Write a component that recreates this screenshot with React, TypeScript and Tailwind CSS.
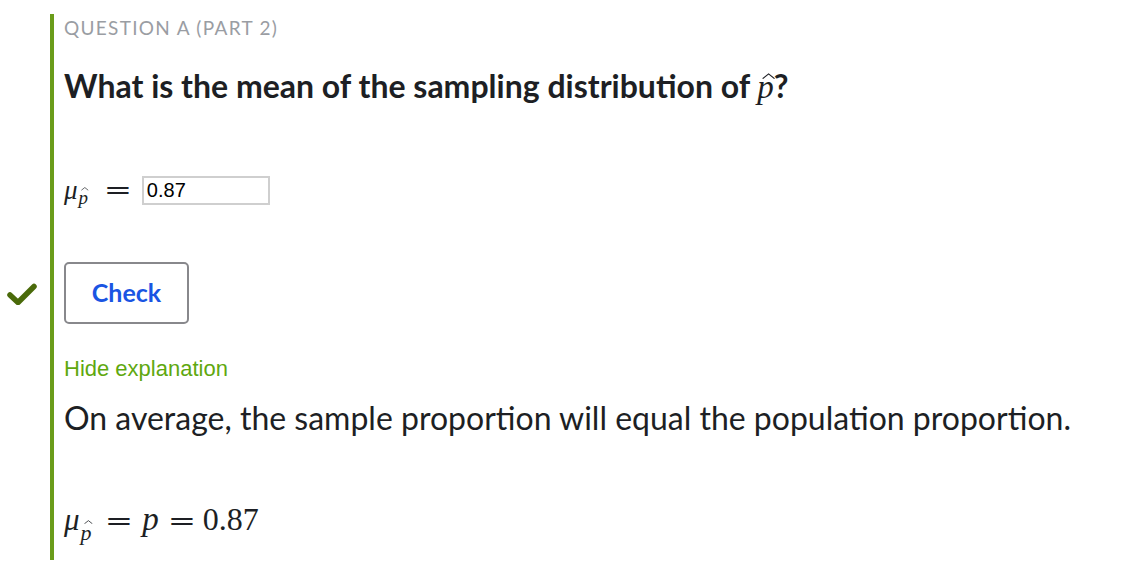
import React from "react";

const serif = "font-['Liberation_Serif','Times_New_Roman',serif]";
const eqFont = "font-['DejaVu_Serif',serif]";

// italic p with a drawn hat accent on top
const PHat = ({ size }: { size: string }) => (
  <span className={`relative inline-block italic font-normal ${serif} ${size}`}>
    p
    <svg
      className="absolute left-[0.15em] top-[0.17em] w-[0.4em] h-[0.19em]"
      viewBox="0 0 20 10"
      preserveAspectRatio="none"
    >
      <path d="M1 9 L10 1.5 L19 9" fill="none" stroke="currentColor" strokeWidth="1.8" />
    </svg>
  </span>
);

const MuP = ({ big }: { big?: boolean }) => (
  <span className={`inline-flex items-baseline ${serif}`}>
    <span className={`italic ${big ? "text-[31px]" : "text-[27px]"}`}>μ</span>
    <span className="relative top-[0.32em] ml-[1px]">
      <PHat size={big ? "text-[22px]" : "text-[19px]"} />
    </span>
  </span>
);

const Eq = ({ className }: { className: string }) => (
  <span className={`${eqFont} inline-block scale-x-[1.3] text-[26px] ${className}`}>=</span>
);

const CheckIcon = () => (
  <svg width="30" height="22" viewBox="0 0 30 22">
    <path
      d="M3 12 L11 19.5 L27 3.5"
      fill="none"
      stroke="#4a6a0a"
      strokeWidth="5.5"
      strokeLinecap="round"
      strokeLinejoin="round"
    />
  </svg>
);

export default function App() {
  return (
    <div className="bg-white w-[1122px] h-[588px] pt-[14px] font-['Lato',sans-serif] text-[#1d1f24]">
      <div className="ml-[50px] border-l-4 border-[#6a9c1a] pl-[10px] h-[546px] flex flex-col">
        <p className="text-[19px] leading-[28px] tracking-[1.3px] text-[#9a9da3] uppercase">
          Question A (Part 2)
        </p>

        <h1 className="mt-[24px] text-[32px] leading-[40px] font-bold">
          What is the mean of the sampling distribution of{" "}
          <PHat size="text-[33px]" />?
        </h1>

        <div className="mt-[68px] flex items-center h-[30px]">
          <MuP />
          <Eq className="leading-none ml-[19px] mr-[13px]" />
          <input
            readOnly
            value="0.87"
            className="w-[128px] h-[29px] border-2 border-[#cfcfcf] px-[3px] text-[20px] font-['Liberation_Sans',Arial,sans-serif] text-black outline-none"
          />
        </div>

        <div className="relative mt-[57px] flex">
          <span className="absolute left-[-57px] top-[21px]">
            <CheckIcon />
          </span>
          <button className="w-[125px] h-[62px] rounded-[5px] border-2 border-[#88888c] bg-white text-[25px] font-bold text-[#1a55e3]">
            Check
          </button>
        </div>

        <p className="mt-[32px] text-[22px] leading-[26px] text-[#5fa80f] font-['Liberation_Sans',Arial,sans-serif]">
          Hide explanation
        </p>

        <p className="mt-[16px] text-[32px] leading-[40px]">
          On average, the sample proportion will equal the population proportion.
        </p>

        <div className={`mt-[64px] flex items-baseline ${serif} text-[32px] leading-[34px]`}>
          <MuP big />
          <Eq className="ml-[16px]" />
          <span className="italic text-[33px] ml-[13px]">p</span>
          <Eq className="ml-[12px]" />
          <span className="ml-[10px]">0.87</span>
        </div>
      </div>
    </div>
  );
}
